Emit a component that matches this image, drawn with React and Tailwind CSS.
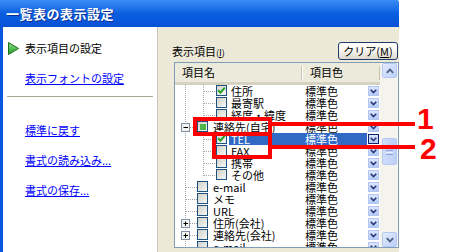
import React from 'react';

const rows = [
  { name: '住所', level: 2, checked: true },
  { name: '最寄駅', level: 2 },
  { name: '経度・緯度', level: 2, last: true },
  { name: '連絡先(自宅)', level: 1, expand: '-', partial: true },
  { name: 'TEL', level: 2, checked: true, selected: true },
  { name: 'FAX', level: 2 },
  { name: '携帯', level: 2 },
  { name: 'その他', level: 2, last: true },
  { name: 'e-mail', level: 1 },
  { name: 'メモ', level: 1 },
  { name: 'URL', level: 1 },
  { name: '住所(会社)', level: 1, expand: '+' },
  { name: '連絡先(会社)', level: 1, expand: '+' },
  { name: 'e-mail', level: 1 },
];

// tree connectors for one row (dotted lines + expand box)
function TreeLines({ row }) {
  const w = row.level === 1 ? 22 : 41;
  return (
    <svg width={w} height="12" className="shrink-0">
      <line x1="10.5" y1="0" x2="10.5" y2="12" stroke="#a7a7a7" strokeDasharray="1 1" />
      {row.level === 1 && (
        <line x1="11" y1="6.5" x2="22" y2="6.5" stroke="#a7a7a7" strokeDasharray="1 1" />
      )}
      {row.level === 2 && (
        <>
          <line x1="28.5" y1="0" x2="28.5" y2={row.last ? 7 : 12} stroke="#a7a7a7" strokeDasharray="1 1" />
          <line x1="29" y1="6.5" x2="41" y2="6.5" stroke="#a7a7a7" strokeDasharray="1 1" />
        </>
      )}
      {row.expand && (
        <>
          <rect x="6.5" y="2.5" width="8" height="8" fill="#f4f4f0" stroke="#7f8fa8" />
          <line x1="8.5" y1="6.5" x2="13" y2="6.5" stroke="#000" />
          {row.expand === '+' && <line x1="10.5" y1="4.5" x2="10.5" y2="9" stroke="#000" />}
        </>
      )}
    </svg>
  );
}

function Checkbox({ checked, partial }) {
  return (
    <div className="w-[11px] h-[11px] shrink-0 border border-[#1c5180] bg-linear-to-br from-[#d2d2cb] to-[#f7f7f4] flex items-center justify-center">
      {checked && (
        <svg width="9" height="9" viewBox="0 0 9 9">
          <path d="M1.2 4.2 L3.5 6.6 L7.8 1.6" fill="none" stroke="#21a121" strokeWidth="2" />
        </svg>
      )}
      {partial && <div className="w-[6px] h-[6px] bg-[#4db64d]" />}
    </div>
  );
}

function DropBtn({ active }) {
  return (
    <div
      className={
        active
          ? 'w-[11px] h-[10px] shrink-0 border border-[#0a246a] bg-linear-to-b from-[#dde7fd] to-[#b5c9f7] flex items-center justify-center'
          : 'w-[11px] h-[10px] shrink-0 border border-[#b4c7f2] bg-linear-to-b from-[#dde7fd] to-[#b5c9f7] flex items-center justify-center'
      }
    >
      <svg width="7" height="5" viewBox="0 0 7 5">
        <path d="M0.7 0.7 L3.5 3.6 L6.3 0.7" fill="none" stroke="#26397a" strokeWidth="1.6" />
      </svg>
    </div>
  );
}

function ScrollBtn({ dir }) {
  return (
    <div className="w-[15px] h-[15px] rounded-[2px] border border-[#b6c9f3] bg-linear-to-br from-[#e4ecfe] to-[#bccff9] flex items-center justify-center">
      <svg width="8" height="6" viewBox="0 0 8 6">
        <path
          d={dir === 'up' ? 'M0.8 4.8 L4 1.6 L7.2 4.8' : 'M0.8 1.2 L4 4.4 L7.2 1.2'}
          fill="none"
          stroke="#4d6185"
          strokeWidth="1.8"
        />
      </svg>
    </div>
  );
}

function ListRow({ row }) {
  const sel = row.selected;
  return (
    <div className="flex h-[12px] text-[11px] leading-[12px]">
      <div className="w-[126px] flex shrink-0">
        <TreeLines row={row} />
        <Checkbox checked={row.checked} partial={row.partial} />
        <div
          className={
            sel
              ? 'flex-1 ml-[2px] pl-[2px] bg-[#316ac5] text-white whitespace-nowrap'
              : row.level === 1
              ? 'flex-1 ml-[2px] pl-[3px] whitespace-nowrap'
              : 'flex-1 ml-[2px] pl-[2px] whitespace-nowrap'
          }
        >
          {row.name}
        </div>
      </div>
      <div className="w-[79px] flex shrink-0 items-center">
        <div className={sel ? 'flex-1 h-[12px] pl-[4px] bg-[#316ac5] text-white' : 'flex-1 h-[12px] pl-[4px]'}>
          標準色
        </div>
        <div className="ml-[1px] mr-px">
          <DropBtn active={sel} />
        </div>
      </div>
    </div>
  );
}

export default function App() {
  return (
    <div className="relative w-[450px] h-[252px] overflow-hidden bg-white font-['Noto_Sans_CJK_JP',sans-serif] text-black">
      <div className="w-[399px] h-full flex flex-col">
        {/* title bar */}
        <div className="h-[27px] shrink-0 flex items-center pl-[6px] bg-linear-to-b from-[#3a8cf5] via-[#0a5fe0] to-[#0851d6] rounded-tr-[2px]">
          <span className="text-white text-[13px] font-bold leading-none tracking-[0.5px] [text-shadow:1px_1px_0_#0c2e92]">
            一覧表の表示設定
          </span>
        </div>

        <div className="flex flex-1 min-h-0">
          {/* left link panel */}
          <div className="w-[157px] shrink-0 border-l-[3px] border-[#0a56e0] bg-white flex flex-col text-[11px] leading-[16px]">
            <div className="mt-[13px] h-[16px] flex items-center pl-[5px] gap-[6px]">
              <svg width="11" height="13" viewBox="0 0 11 13">
                <defs>
                  <linearGradient id="tri" x1="0" y1="0" x2="0" y2="1">
                    <stop offset="0" stopColor="#8ee08e" />
                    <stop offset="1" stopColor="#1f9a1f" />
                  </linearGradient>
                </defs>
                <path d="M0.5 0.5 L10.5 6.5 L0.5 12.5 Z" fill="url(#tri)" stroke="#1b6e1b" />
              </svg>
              <span>表示項目の設定</span>
            </div>
            <div className="mt-[14px] h-[16px] pl-[22px]">
              <span className="text-[#0000ff] underline underline-offset-[1px]">表示フォントの設定</span>
            </div>
            <div className="mt-[10px] ml-[4px] w-[146px] h-px bg-[#aca899]" />
            <div className="mt-[25px] h-[16px] pl-[22px]">
              <span className="text-[#0000ff] underline underline-offset-[1px]">標準に戻す</span>
            </div>
            <div className="mt-[14px] h-[16px] pl-[22px]">
              <span className="text-[#0000ff] underline underline-offset-[1px]">書式の読み込み...</span>
            </div>
            <div className="mt-[14px] h-[16px] pl-[22px]">
              <span className="text-[#0000ff] underline underline-offset-[1px]">書式の保存...</span>
            </div>
          </div>

          {/* right settings panel */}
          <div className="flex-1 border-l border-[#c9c5b4] bg-[#ece9d8] flex flex-col">
            <div className="mt-[15px] h-[18px] flex items-center justify-between pl-[14px] pr-px">
              <span className="text-[11px] leading-none">
                表示項目<span className="text-[9px]">(<span className="underline">I</span>)</span>
              </span>
              <div className="w-[60px] h-[18px] rounded-[3px] border border-[#1f3b6e] bg-linear-to-b from-white via-[#f5f4ee] to-[#dcd8cb] flex items-center justify-center text-[11px] leading-none">
                クリア(<span className="underline">M</span>)
              </div>
            </div>

            {/* list view */}
            <div className="mt-[2px] ml-[16px] h-[186px] border border-[#7f9db9] bg-white flex overflow-hidden">
              <div className="flex flex-col w-[205px] shrink-0">
                <div className="h-[22px] shrink-0 flex bg-[#ebeadb] border-b-[3px] border-[#d6d2c2] text-[11px]">
                  <div className="w-[126px] flex items-center pl-[7px]">項目名</div>
                  <div className="w-px h-[14px] self-center bg-[#c7c4b3]" />
                  <div className="w-px h-[14px] self-center bg-white" />
                  <div className="w-[76px] flex items-center pl-[7px]">項目色</div>
                  <div className="w-px h-[14px] self-center bg-[#c7c4b3]" />
                </div>
                {rows.map((r, i) => (
                  <ListRow key={i} row={r} />
                ))}
              </div>
              {/* scrollbar */}
              <div className="flex-1 bg-[#f4f3ee] flex flex-col items-end pr-px">
                <ScrollBtn dir="up" />
                <div className="mt-[60px] w-[15px] h-[27px] rounded-[2px] border border-[#b6c9f3] bg-linear-to-r from-[#cfdcfc] to-[#bccff9] flex flex-col items-center justify-center gap-px">
                  <div className="w-[7px] h-px bg-[#eef3ff]" />
                  <div className="w-[7px] h-px bg-[#8ea6dc]" />
                  <div className="w-[7px] h-px bg-[#eef3ff]" />
                  <div className="w-[7px] h-px bg-[#8ea6dc]" />
                </div>
                <div className="flex-1" />
                <ScrollBtn dir="down" />
              </div>
            </div>
          </div>
        </div>
      </div>

      {/* red annotations */}
      <div className="absolute left-[193px] top-[117px] w-[79px] h-[19px] border-[4px] border-[#f00]" />
      <div className="absolute left-[212px] top-[132px] w-[60px] h-[27px] border-[4px] border-[#f00]" />
      <div className="absolute left-[270px] top-[122px] w-[145px] h-[4px] bg-[#f00]" />
      <div className="absolute left-[270px] top-[145px] w-[145px] h-[4px] bg-[#f00]" />
      <div className="absolute left-[417px] top-[104px] text-[30px] font-bold leading-none text-[#f00] font-['Liberation_Sans',sans-serif]">
        1
      </div>
      <div className="absolute left-[420px] top-[134px] text-[30px] font-bold leading-none text-[#f00] font-['Liberation_Sans',sans-serif]">
        2
      </div>
    </div>
  );
}
